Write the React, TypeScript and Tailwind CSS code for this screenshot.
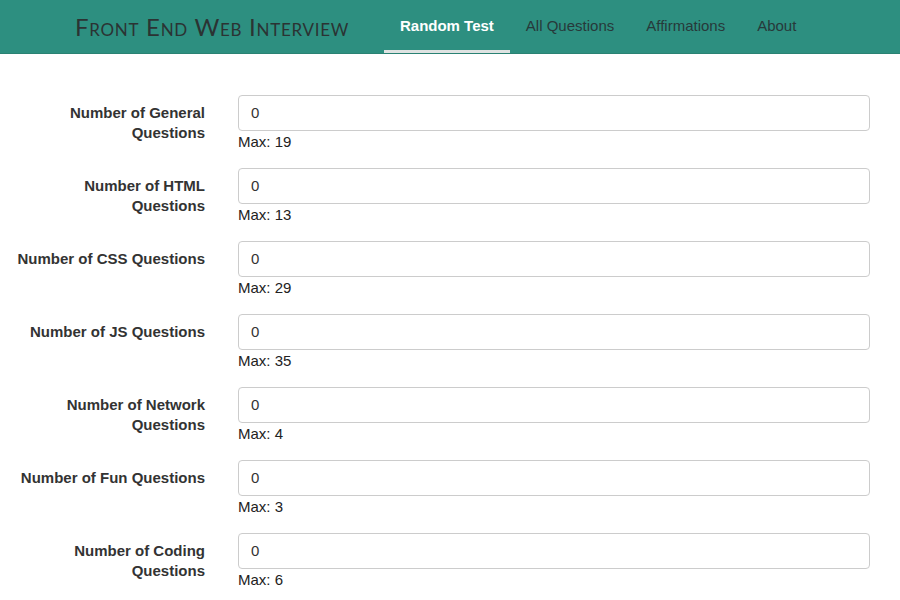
const sections = [
  { label: 'Number of General Questions', max: 19 },
  { label: 'Number of HTML Questions', max: 13 },
  { label: 'Number of CSS Questions', max: 29 },
  { label: 'Number of JS Questions', max: 35 },
  { label: 'Number of Network Questions', max: 4 },
  { label: 'Number of Fun Questions', max: 3 },
  { label: 'Number of Coding Questions', max: 6 },
];

const navItems = ['Random Test', 'All Questions', 'Affirmations', 'About'];

function NavBar() {
  return (
    <nav className="h-[54px] bg-[#2d8f80] flex items-stretch border-b border-[#2a8273]">
      <div className="pl-[75px] pr-[35px] flex items-center">
        <span
          className="text-[24px] text-[#2b3333] tracking-[0.7px] [font-variant:small-caps]"
          style={{ fontFamily: 'Lato, "Open Sans", sans-serif' }}
        >
          Front End Web Interview
        </span>
      </div>
      <ul className="flex items-stretch">
        {navItems.map((item, i) => (
          <li
            key={item}
            className={
              i === 0
                ? 'px-[16px] flex items-center text-[15px] font-bold text-white border-b-[3px] border-[#dfe3e2] pt-[3px]'
                : 'px-[16px] flex items-center text-[15px] text-[#27393a]'
            }
          >
            {item}
          </li>
        ))}
      </ul>
    </nav>
  );
}

function QuestionRow({ label, max }: { label: string; max: number }) {
  return (
    <div className="flex gap-[33px] mb-[16px]">
      <label className="w-[190px] shrink-0 text-right text-[15px] font-bold leading-[20px] text-[#333] pt-[8px]">
        {label}
      </label>
      <div className="flex-1">
        <input
          type="number"
          defaultValue={0}
          className="w-full h-[36px] px-[12px] pb-[1px] rounded-[4px] border border-[#cccccc] bg-white text-[15px] text-[#333] focus:outline-none"
        />
        <div className="text-[15px] leading-[20px] text-[#222] pt-[1px]">Max: {max}</div>
      </div>
    </div>
  );
}

export default function App() {
  return (
    <div className="min-h-[600px] bg-white" style={{ fontFamily: '"Liberation Sans", Arial, sans-serif' }}>
      <NavBar />
      <form className="pt-[41px] pl-[15px] pr-[30px]">
        {sections.map((s) => (
          <QuestionRow key={s.label} label={s.label} max={s.max} />
        ))}
      </form>
    </div>
  );
}
